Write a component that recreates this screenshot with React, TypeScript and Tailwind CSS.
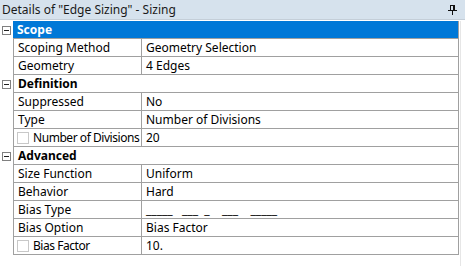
import React from 'react';

type Row =
  | { kind: 'header'; label: string; selected?: boolean }
  | { kind: 'prop'; label: string; value: string; check?: boolean };

const rows: Row[] = [
  { kind: 'header', label: 'Scope', selected: true },
  { kind: 'prop', label: 'Scoping Method', value: 'Geometry Selection' },
  { kind: 'prop', label: 'Geometry', value: '4 Edges' },
  { kind: 'header', label: 'Definition' },
  { kind: 'prop', label: 'Suppressed', value: 'No' },
  { kind: 'prop', label: 'Type', value: 'Number of Divisions' },
  { kind: 'prop', label: 'Number of Divisions', value: '20', check: true },
  { kind: 'header', label: 'Advanced' },
  { kind: 'prop', label: 'Size Function', value: 'Uniform' },
  { kind: 'prop', label: 'Behavior', value: 'Hard' },
  { kind: 'prop', label: 'Bias Type', value: '_____   ___  _    ___    _____' },
  { kind: 'prop', label: 'Bias Option', value: 'Bias Factor' },
  { kind: 'prop', label: 'Bias Factor', value: '10.', check: true },
];

function Minus() {
  return (
    <div className="w-[9px] h-[9px] border border-[#808080] bg-white flex items-center justify-center">
      <div className="w-[5px] h-px bg-[#202020]" />
    </div>
  );
}

function Pin() {
  return (
    <svg width="9" height="10" viewBox="0 0 9 10" shapeRendering="crispEdges">
      <rect x="2.5" y="0.5" width="4" height="5" fill="none" stroke="#111" />
      <rect x="5" y="1" width="1" height="4" fill="#111" />
      <rect x="0" y="5" width="9" height="1" fill="#111" />
      <rect x="4" y="6" width="1" height="4" fill="#111" />
    </svg>
  );
}

export default function App() {
  return (
    <div className="w-[465px] h-[266px] bg-white overflow-hidden text-[12px] text-[#000] font-['Noto_Sans',sans-serif] leading-none">
      {/* Title bar */}
      <div className="h-[20px] bg-[#d6e2ed] border-b border-[#c4ced8] flex items-center justify-between pl-[2px] pr-[8px]">
        <span className="text-[#1a1a1a]">Details of "Edge Sizing" - Sizing</span>
        <Pin />
      </div>

      <div className="flex mt-px">
        <div className="flex flex-col">
          {rows.map((r, i) => (
            <div key={i} className="flex h-[18px]">
              <div className="w-[13px] flex items-center justify-center">
                {r.kind === 'header' && <Minus />}
              </div>
              {r.kind === 'header' ? (
                <div
                  className={`w-[446px] flex items-center pl-[4px] font-bold border-b border-r border-[#a0a0a0] ${
                    r.selected ? 'bg-[#0078d7] text-white border-l-0' : 'border-l bg-white'
                  }`}
                >
                  {r.label}
                </div>
              ) : (
                <div className="w-[446px] flex border-l border-r border-b border-[#a0a0a0]">
                  {r.check ? (
                    <div className="w-[128px] shrink-0 flex items-center pl-[3px] border-r border-[#a0a0a0] whitespace-nowrap tracking-[-0.45px]">
                      <div className="w-[12px] h-[12px] shrink-0 border border-[#c8c8c8] bg-white mr-[4px]" />
                      {r.label}
                    </div>
                  ) : (
                    <div className="w-[128px] shrink-0 flex items-center pl-[4px] border-r border-[#a0a0a0] whitespace-nowrap">
                      {r.label}
                    </div>
                  )}
                  <div className="flex-1 flex items-center pl-[4px] whitespace-pre">{r.value}</div>
                </div>
              )}
            </div>
          ))}
        </div>
        <div className="ml-[1px] w-[5px] h-[245px] border-l border-[#e6e6e6]" />
      </div>
    </div>
  );
}
